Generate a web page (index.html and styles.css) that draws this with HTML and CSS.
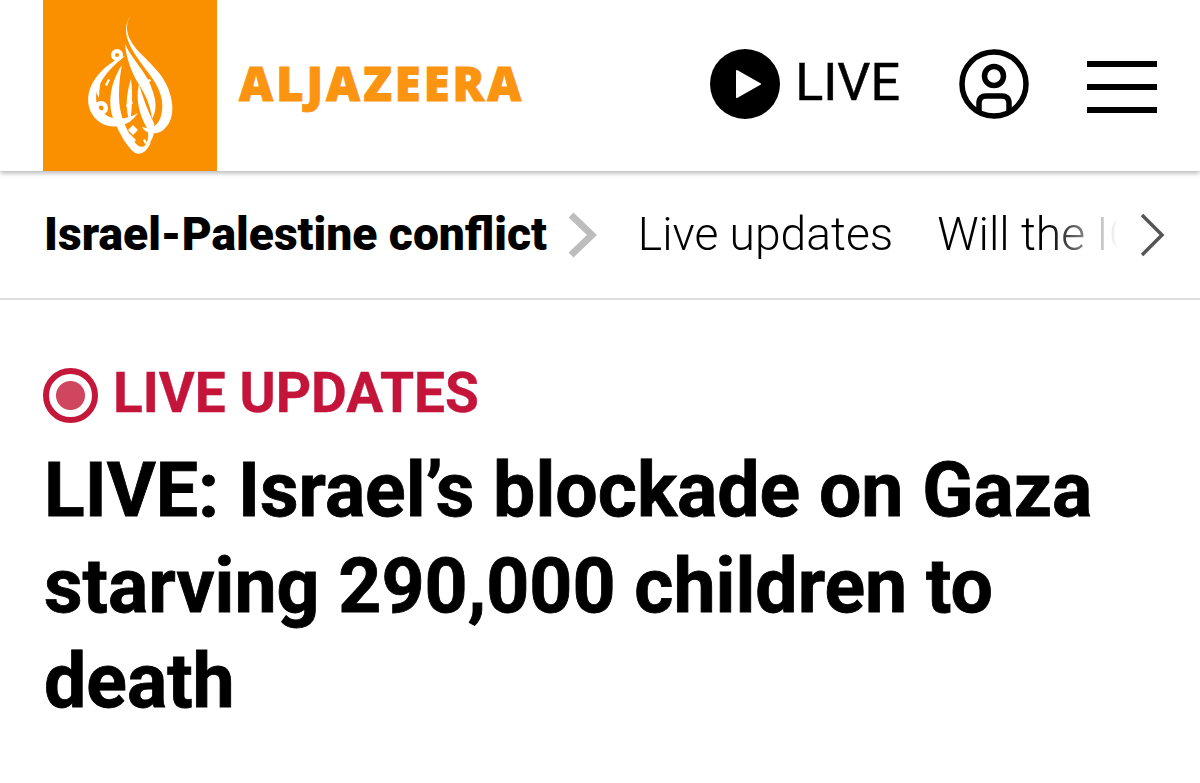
FILE: index.html
```html
<!DOCTYPE html>
<html lang="en">
    <head>
        <meta charset="utf-8">
        <title>Al Jazeera</title>
        <link rel="stylesheet" href="styles.css">
    </head>
    <body>
        <header class="site-head">
            <a class="logo-box">
                <svg class="logo-mark" width="174" height="171" viewBox="0 0 174 171" fill="#fff">
                    <!-- outer drop -->
                    <path d="M88 15C82 24 83 33 89 43C98 57 117 68 125 88C132 106 131 122 119 131C112 135 103 134 99 127C108 130 115 126 118 116C122 102 117 88 107 75C97 61 83 45 83 30C83 24 85 19 88 15Z"/>
                    <path d="M82 44C89 60 105 73 110 92C114 104 113 112 109 119C108 107 103 95 95 83C89 73 83 58 82 44Z"/>
                    <!-- left belly -->
                    <path d="M82 56C69 60 51 74 46 92C42 109 52 123 66 126C79 128 89 122 95 113C86 119 72 121 63 115C53 109 51 98 55 88C61 74 72 64 82 56Z"/>
                    <path d="M79 65C69 80 64 100 70 118C76 133 84 147 92 153C99 156 105 150 108 142C101 149 95 148 91 141C81 127 76 112 76 96C76 84 77 75 79 65Z"/>
                    <path d="M96 84C92 100 97 116 104 128C107 138 104 144 99 149C108 145 113 134 111 123C105 112 100 98 96 84Z"/>
                    <path d="M61 69C52 78 51 89 56 98C56 88 58 78 61 69Z"/>
                    <path d="M88 79C83 94 82 110 87 123C89 110 90 94 88 79Z"/>
                    <!-- dots and small marks -->
                    <path d="M81 140l6-6 6 6-6 6zM85 130l5-5 5 5-5 5zM83 105l6-4 1 2-6 5zM98 82l9-3 1 2-9 4zM62 85l3-6 2 1-3 6zM100 140l2 4 2-1-2-4z"/>
                    <path fill-rule="evenodd" d="M58 101a7 7 0 1 1 0 14a7 7 0 1 1 0-14zM58 105.500a2.500 2.500 0 1 0 0 5a2.500 2.500 0 1 0 0-5z"/>
                    <path fill-rule="evenodd" d="M74 49a6 6 0 1 1 0 12a6 6 0 1 1 0-12zM74 53a2 2 0 1 0 0 4a2 2 0 1 0 0-4z"/>
                </svg>
            </a>
            <span class="wordmark">ALJAZEERA</span>
            <div class="head-tools">
                <div class="live-link">
                    <svg width="70" height="70" viewBox="0 0 70 70">
                        <circle cx="35" cy="35" r="35" fill="#000"/>
                        <path d="M27 22L50 35L27 48Z" fill="#fff" stroke="#fff" stroke-width="2" stroke-linejoin="round"/>
                    </svg>
                    <span>LIVE</span>
                </div>
                <svg class="user-icon" width="70" height="70" viewBox="0 0 70 70" fill="none" stroke="#000" stroke-width="5.500">
                    <circle cx="35" cy="35" r="32"/>
                    <circle cx="35" cy="27" r="9.500"/>
                    <path d="M20 63V54C20 49 23 47 27 47H43C47 47 50 49 50 54V63"/>
                </svg>
                <div class="burger"><i></i><i></i><i></i></div>
            </div>
        </header>

        <nav class="topic-bar">
            <strong>Israel-Palestine conflict</strong>
            <svg class="crumb-arrow" width="30" height="46" viewBox="0 0 30 46" fill="none" stroke="#bdbdbd" stroke-width="7">
                <path d="M4 3L25 23L4 43"/>
            </svg>
            <div class="topic-links">
                <a>Live updates</a>
                <a>Will the ICJ</a>
            </div>
            <svg class="more-arrow" width="26" height="44" viewBox="0 0 26 44" fill="none" stroke="#555" stroke-width="3.500">
                <path d="M3 2L23 22L3 42"/>
            </svg>
        </nav>

        <main class="story">
            <div class="live-tag">
                <span class="live-dot"></span>
                <span>LIVE UPDATES</span>
            </div>
            <h1>LIVE: Israel’s blockade on Gaza starving 290,000 children to death</h1>
        </main>
    </body>
</html>
```

FILE: styles.css
```css
*{
    margin: 0;
    padding: 0;
    box-sizing: border-box;
}
body{
    background: #fff;
    color: #000;
    font-family: Roboto, "Liberation Sans", sans-serif;
}
.site-head{
    height: 171px;
    padding: 0 43px;
    display: flex;
    align-items: center;
    box-shadow: 0 2px 5px rgba(0,0,0,.3);
    position: relative;
}
.logo-box{
    width: 174px;
    height: 171px;
    background: #fa9000;
    flex: none;
}
.logo-mark{
    display: block;
}
.wordmark{
    margin-left: 22px;
    margin-bottom: 5px;
    color: #fb9410;
    font-family: "Open Sans", sans-serif;
    font-size: 47px;
    font-weight: 800;
    letter-spacing: 3px;
    -webkit-text-stroke: 1px #fb9410;
}
.head-tools{
    margin-left: auto;
    margin-bottom: 3px;
    display: flex;
    align-items: center;
}
.live-link{
    display: flex;
    align-items: center;
    gap: 15px;
    font-size: 52px;
    font-weight: 400;
    line-height: 64px;
    -webkit-text-stroke: .5px #000;
}
.live-link svg{
    margin-left: 2px;
}
.live-link span{
    margin-top: -3px;
}
.user-icon{
    margin-left: 59px;
}
.burger{
    width: 70px;
    margin-left: 58px;
    margin-top: 6px;
    display: flex;
    flex-direction: column;
    gap: 17px;
}
.burger i{
    display: block;
    height: 6px;
    background: #000;
}
.topic-bar{
    height: 129px;
    padding: 0 35px 2px 44px;
    display: flex;
    align-items: center;
    border-bottom: 2px solid #ddd;
    font-size: 46.2px;
}
.topic-bar strong{
    font-weight: 900;
    white-space: nowrap;
}
.crumb-arrow{
    margin-left: 20px;
    margin-top: 2px;
    flex: none;
}
.topic-links{
    width: 490px;
    margin-left: 41px;
    display: flex;
    gap: 44px;
    overflow: hidden;
    white-space: nowrap;
    font-weight: 300;
    -webkit-mask-image: linear-gradient(to right, #000 410px, transparent 480px);
    mask-image: linear-gradient(to right, #000 410px, transparent 480px);
}
.more-arrow{
    margin-left: auto;
    margin-top: 2px;
    flex: none;
}
.story{
    padding: 62px 44px 0;
}
.live-tag{
    display: flex;
    align-items: center;
    gap: 15px;
    color: #c4143a;
    font-size: 55px;
    font-weight: 700;
    line-height: 62px;
    -webkit-text-stroke: .4px #c4143a;
}
.live-dot{
    width: 55px;
    height: 55px;
    margin-top: 4px;
    margin-left: -1px;
    border: 6px solid #c4173a;
    border-radius: 50%;
    background: radial-gradient(circle, #d0465f 0 14px, #fff 15px);
}
h1{
    margin-top: 19px;
    width: 1100px;
    font-size: 75.2px;
    font-weight: 700;
    line-height: 95.5px;
    -webkit-text-stroke: .8px #000;
}
```
